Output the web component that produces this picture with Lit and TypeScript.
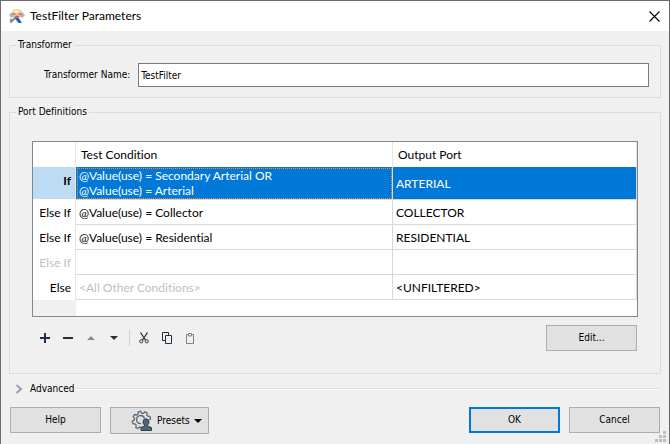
import { LitElement, html, css, nothing } from "lit";
import { customElement, state } from "lit/decorators.js";
import { classMap } from "lit/directives/class-map.js";

interface PortRow {
  kind: string;
  tests: string[];
  port: string;
  mutedKind?: boolean;
  mutedTest?: boolean;
}

const ROWS: PortRow[] = [
  { kind: "If", tests: ["@Value(use) = Secondary Arterial OR", "@Value(use) = Arterial"], port: "ARTERIAL" },
  { kind: "Else If", tests: ["@Value(use) = Collector"], port: "COLLECTOR" },
  { kind: "Else If", tests: ["@Value(use) = Residential"], port: "RESIDENTIAL" },
  { kind: "Else If", tests: [], port: "", mutedKind: true },
  { kind: "Else", tests: ["<All Other Conditions>"], port: "<UNFILTERED>", mutedTest: true },
];

@customElement("port-table")
export class PortTable extends LitElement {
  static styles = css`
    :host {
      display: block;
      box-sizing: border-box;
      border: 1px solid #828790;
      min-height: 176px;
      background: linear-gradient(to right, #f0f0f0 43px, #fff 43px);
    }
    table {
      width: 100%;
      table-layout: fixed;
      border-collapse: separate;
      border-spacing: 0;
      font-family: Lato, "Open Sans", sans-serif;
      font-variant-ligatures: none;
      font-size: 12px;
      line-height: 15px;
      color: #000;
    }
    .kind-col { width: 43px; }
    .port-col { width: 244px; }
    th, td {
      box-sizing: border-box;
      height: 25px;
      padding: 0 3px;
      text-align: left;
      font-weight: 400;
      background: #fff;
      border-right: 1px solid #d8d8d8;
      border-bottom: 1px solid #d8d8d8;
      white-space: nowrap;
    }
    thead th { padding: 0 5px; border-bottom: 0; border-right-color: #e5e5e5; }
    tbody th { text-align: right; padding: 0 4px 0 0; border-bottom: 0; border-right-color: #e5e5e5; }
    .muted { color: #bfbfbf; }
    .current th {
      height: 33px;
      padding-bottom: 6px;
      font-weight: 700;
      background: linear-gradient(#bcdcf4 32px, #fff 32px);
    }
    .current td { color: #fff; background: #0078d7; }
    .current .focus { outline: 1px dotted #ff8728; outline-offset: -2px; }
  `;

  @state() private current = 0;

  render() {
    return html`
      <table>
        <colgroup><col class="kind-col" /><col /><col class="port-col" /></colgroup>
        <thead>
          <tr><th scope="col"></th><th scope="col">Test Condition</th><th scope="col">Output Port</th></tr>
        </thead>
        <tbody>
          ${ROWS.map((row, i) => html`
            <tr class=${classMap({ current: i === this.current })} @click=${() => (this.current = i)}>
              <th scope="row" class=${classMap({ muted: !!row.mutedKind })}>${row.kind}</th>
              <td class=${classMap({ focus: i === this.current, muted: !!row.mutedTest })}>
                ${row.tests.map((t) => html`<div>${t}</div>`)}
              </td>
              <td>${row.port || nothing}</td>
            </tr>`)}
        </tbody>
      </table>
    `;
  }
}

@customElement("app-root")
export class AppRoot extends LitElement {
  static styles = css`
    :host {
      display: flex;
      flex-direction: column;
      box-sizing: border-box;
      min-height: 100vh;
      border: 1px solid #6b6b6b;
      background: #f0f0f0;
      color: #000;
      font-family: "DejaVu Sans Condensed", "DejaVu Sans", sans-serif;
      font-variant-ligatures: none;
      font-size: 10px;
      line-height: 14px;
    }
    button, input { font: inherit; color: inherit; box-sizing: border-box; margin: 0; }
    svg { display: block; }
    .title {
      display: flex;
      align-items: center;
      height: 30px;
      padding: 0 9px 0 8px;
      gap: 5px;
      background: #fff;
    }
    h1 {
      flex: 1;
      margin: 0;
      font-family: Lato, "Open Sans", sans-serif;
      font-size: 12px;
      line-height: 16px;
      font-weight: 400;
    }
    .plain { padding: 0; border: 0; background: none; display: grid; place-items: center; }
    .frame { position: relative; flex: 1; display: flex; flex-direction: column; }
    .body { flex: 1; display: flex; flex-direction: column; padding: 7px 8px 10px; }
    fieldset { margin: 0; min-width: 0; border: 1px solid #dcdcdc; }
    legend { padding: 0 2px; }
    .name { padding: 11px 11px 10px; }
    .name legend { margin-left: -5px; }
    .name-row { display: flex; align-items: center; gap: 8px; padding-left: 23px; }
    .name-row input {
      flex: 1;
      min-width: 0;
      height: 24px;
      padding: 0 2px;
      border: 1px solid #7a7a7a;
      background: #fff;
    }
    .ports { flex: 1; margin-top: 7px; padding: 22px 22px; }
    .ports legend { margin-left: -16px; }
    .tools { display: flex; align-items: center; margin-top: 8px; padding-right: 1px; }
    .icons { flex: 1; display: flex; align-items: center; gap: 7px; padding-left: 5px; }
    .icons .plain { width: 16px; height: 16px; }
    .rule { width: 1px; height: 16px; margin-right: -1px; background: #d0d0d0; }
    .push {
      width: 91px;
      height: 26px;
      padding: 0;
      border: 1px solid #adadad;
      background: #e1e1e1;
    }
    .default { border: 2px solid #0078d7; }
    .advanced { display: flex; align-items: center; gap: 2px; margin: 8px 0 11px; }
    .advanced .plain { display: flex; align-items: center; gap: 7px; padding-left: 6px; }
    .line { flex: 1; height: 1px; background: #dfdfdf; border-bottom: 1px solid #fff; }
    .actions { display: flex; gap: 9px; padding: 0 1px; }
    .presets {
      display: flex;
      align-items: center;
      gap: 4px;
      width: 99px;
      height: 27px;
      padding-left: 20px;
    }
    .space { flex: 1; }
    .grip { position: absolute; right: 3px; bottom: 2px; }
  `;

  @state() private advancedOpen = false;

  render() {
    return html`
      <header class="title">
        <svg width="16" height="16" viewBox="0 0 16 16" aria-hidden="true">
          <path d="M2.500 6 Q3 1 8 1 T13.500 6Z" fill="#f3d680" />
          <path d="M5.500 3 Q8 1.500 9.500 3 V5 H5.500Z" fill="#fdf3d8" />
          <path d="M0 7.500 L2 4.500 L5.500 5 L6 8 L3 10Z M16 7.500 L14 4.500 L10.500 5 L10 8 L13 10Z" fill="#b9b3b4" />
          <path d="M4 5.500 H12 L11 9 L8 10 L5 9Z" fill="#eec0ae" />
          <path d="M3.500 6.500 L6.500 5.500 M9.500 5.500 L12.500 6.500 M6 8.500 H10" stroke="#cf5348" stroke-width="1.300" />
          <path d="M1.500 14.500 L6 10 M1 11.500 L4 13" stroke="#85898f" stroke-width="2" />
          <path d="M5 9.500 L9.500 9.500 L11 12 L13 15 H9.500 L7.500 12.500Z" fill="#2b5fb0" />
        </svg>
        <h1>TestFilter Parameters</h1>
        <button class="plain" aria-label="Close">
          <svg width="11" height="11" viewBox="0 0 11 11"><path d="M.5 .5 L10.500 10.500 M10.500 .5 L.5 10.500" stroke="#000" stroke-width="1.100" /></svg>
        </button>
      </header>
      <main class="frame">
        <div class="body">
          <fieldset class="name">
            <legend>Transformer</legend>
            <div class="name-row">
              <label for="name">Transformer Name:</label>
              <input id="name" type="text" value="TestFilter" />
            </div>
          </fieldset>
          <fieldset class="ports">
            <legend>Port Definitions</legend>
            <port-table></port-table>
            <div class="tools">
              <div class="icons">
                <button class="plain" aria-label="Add">
                  <svg width="12" height="12" viewBox="0 0 12 12"><path d="M6 1 V11 M1 6 H11" stroke="#22313f" stroke-width="2" /></svg>
                </button>
                <button class="plain" aria-label="Remove">
                  <svg width="12" height="12" viewBox="0 0 12 12"><path d="M1 6 H11" stroke="#22313f" stroke-width="2" /></svg>
                </button>
                <button class="plain" aria-label="Move up">
                  <svg width="8" height="4" viewBox="0 0 8 4"><path d="M0 4 L4 0 L8 4Z" fill="#8a8a8a" /></svg>
                </button>
                <button class="plain" aria-label="Move down">
                  <svg width="8" height="4" viewBox="0 0 8 4"><path d="M0 0 L4 4 L8 0Z" fill="#22313f" /></svg>
                </button>
                <span class="rule"></span>
                <button class="plain" aria-label="Cut">
                  <svg width="10" height="12" viewBox="0 0 10 12" fill="none" stroke="#22313f">
                    <path d="M1.500 .5 L6.500 8 M8.500 .5 L3.500 8" stroke-width="1.300" />
                    <circle cx="2.300" cy="9.300" r="1.600" /><circle cx="7.700" cy="9.300" r="1.600" />
                  </svg>
                </button>
                <button class="plain" aria-label="Copy">
                  <svg width="10" height="12" viewBox="0 0 10 12" fill="none" stroke="#22313f">
                    <path d="M3 8.500 H.5 V.5 H6.500 V3" /><path d="M3.500 3.500 H9.500 V11.500 H3.500Z" />
                  </svg>
                </button>
                <button class="plain" aria-label="Paste">
                  <svg width="8" height="12" viewBox="0 0 8 12" fill="none" stroke="#808080">
                    <path d="M.5 2.500 H7.500 V11.500 H.5Z" /><path d="M2.500 4 V1.500 H5.500 V4Z" fill="#f0f0f0" />
                  </svg>
                </button>
              </div>
              <button class="push">Edit...</button>
            </div>
          </fieldset>
          <div class="advanced">
            <button class="plain" aria-expanded=${this.advancedOpen} @click=${() => (this.advancedOpen = !this.advancedOpen)}>
              <svg width="8" height="10" viewBox="0 0 8 10"><path d="M1.500 1 L6 5 L1.500 9" fill="none" stroke="#a0a0a0" stroke-width="2" /></svg>
              Advanced
            </button>
            <span class="line"></span>
          </div>
          <div class="actions">
            <button class="push">Help</button>
            <button class="push presets">
              <svg width="22" height="22" viewBox="0 0 22 22" fill="none">
                <path d="M18.500 10 L19.500 9 L19 6.500 L16.500 6 L15.800 5 L16.300 3 L14 1.800 L12.500 3.300 H11 L9.500 1.300 L7.300 2 L7 4.200 L5.800 5 L3.500 4.500 L2.200 6.800 L3.600 8.500 L3.300 10 L1.200 11.200 L2 13.700 L4.300 14 L5.200 15.200 L4.800 17.300 L7 18.500 L8.500 17 L10 17.300" stroke="#5b6b78" stroke-width="1.300" />
                <path d="M13.500 8.500 A4 4 0 1 0 10 13.500" stroke="#5b6b78" stroke-width="1.300" />
                <path d="M12 12 A3 3.200 0 0 1 18 12 Q18 14 16.500 15 V16 L20.500 17.500 V20.500 H10 V17.500 L13.500 16 V15 Q12 14 12 12Z" fill="#4d6475" stroke="#2e4250" />
              </svg>
              Presets
              <svg width="8" height="4" viewBox="0 0 8 4"><path d="M0 0 H8 L4 4Z" fill="#000" /></svg>
            </button>
            <span class="space"></span>
            <button class="push default">OK</button>
            <button class="push">Cancel</button>
          </div>
        </div>
        <svg class="grip" width="11" height="11" viewBox="0 0 11 11" aria-hidden="true">
          <path d="M8 0h3v3h-3zM4 4h3v3h-3zM8 4h3v3h-3zM0 8h3v3h-3zM4 8h3v3h-3zM8 8h3v3h-3z" fill="#bfbfbf" />
        </svg>
      </main>
    `;
  }
}
